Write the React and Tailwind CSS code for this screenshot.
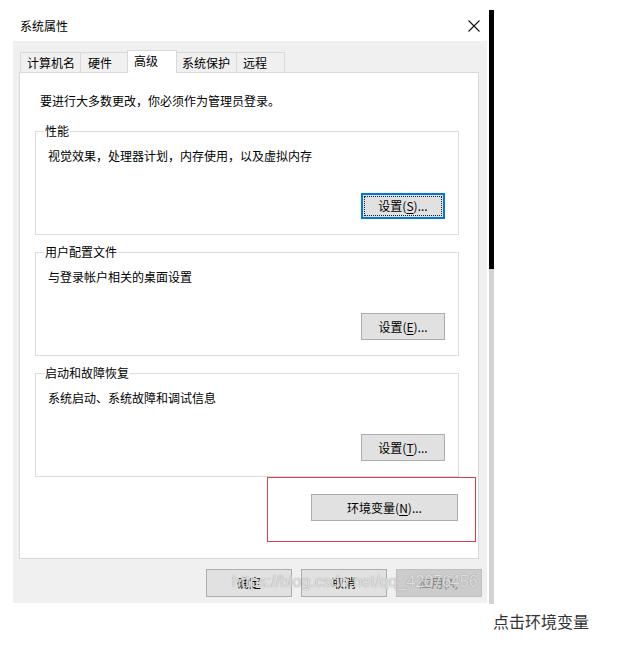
import React from "react";

const FONT = "font-['Microsoft_YaHei','Noto_Sans_CJK_SC',sans-serif]";

function Btn({ label, u, rest, focused, className = "" }) {
  return (
    <div
      className={
        "relative flex items-center justify-center bg-[#e1e1e1] text-[12px] leading-[16px] text-black " +
        (focused ? "border-2 border-[#0078d7] " : "border border-[#adadad] ") +
        className
      }
    >
      {focused && (
        <span className="absolute inset-[1px] border border-dotted border-[#222]" />
      )}
      <span className="relative">
        {label}(<span className="underline underline-offset-2">{u}</span>){rest}
      </span>
    </div>
  );
}

function Group({ title, text, children }) {
  return (
    <div className="relative h-[104px] border border-[#dcdcdc] flex flex-col pl-[12px] pr-[13px] pt-[16px] pb-[15px]">
      <span className="absolute -top-[9px] left-[8px] bg-white px-[1px] text-[12px] leading-[16px] text-black">
        {title}
      </span>
      <div className="text-[12px] leading-[16px] text-black">{text}</div>
      <div className="mt-auto self-end">{children}</div>
    </div>
  );
}

export default function App() {
  return (
    <div className={"relative w-[630px] h-[648px] bg-white overflow-hidden " + FONT}>
      <div className="flex pt-[10px] pl-[13px]">
        <div className="w-[474px] flex flex-col">
          <div className="h-[31px] flex items-center justify-between pl-[7px] pr-[7px] bg-white">
            <span className="text-[12px] leading-[16px] text-black">系统属性</span>
            <svg width="12" height="12" viewBox="0 0 12 12">
              <path d="M0.5 0.5 L11.5 11.5 M11.5 0.5 L0.5 11.5" stroke="#111" strokeWidth="1.1" />
            </svg>
          </div>
          <div className="h-[562px] bg-[#f0f0f0] pt-[9px] flex flex-col">
            <div className="relative z-10 -mb-[1px] h-[23px] flex items-end pl-[7px] text-[12px] leading-[16px] text-black">
              <div className="w-[60px] h-[21px] border border-r-0 border-[#d9d9d9] bg-[#f0f0f0] flex items-center pl-[6px]">计算机名</div>
              <div className="w-[47px] h-[21px] border border-r-0 border-[#d9d9d9] bg-[#f0f0f0] flex items-center pl-[7px]">硬件</div>
              <div className="w-[50px] h-[23px] border border-b-0 border-[#d9d9d9] bg-white flex items-center pl-[6px] pb-[3px]">高级</div>
              <div className="w-[59px] h-[21px] border border-l-0 border-r-0 border-[#d9d9d9] bg-[#f0f0f0] flex items-center pl-[5px]">系统保护</div>
              <div className="w-[49px] h-[21px] border border-[#d9d9d9] bg-[#f0f0f0] flex items-center pl-[6px]">远程</div>
            </div>
            <div className="relative ml-[6px] w-[460px] h-[487px] bg-white border border-[#d9d9d9] pt-[20px] pl-[15px] pr-[19px] flex flex-col">
              <div className="ml-[5px] text-[12px] leading-[16px] text-black">
                要进行大多数更改，你必须作为管理员登录。
              </div>
              <div className="mt-[22px] flex flex-col gap-[17px]">
                <Group title="性能" text="视觉效果，处理器计划，内存使用，以及虚拟内存">
                  <Btn label="设置" u="S" rest="..." focused className="w-[84px] h-[26px]" />
                </Group>
                <Group title="用户配置文件" text="与登录帐户相关的桌面设置">
                  <Btn label="设置" u="E" rest="..." className="w-[84px] h-[27px]" />
                </Group>
                <Group title="启动和故障恢复" text="系统启动、系统故障和调试信息">
                  <Btn label="设置" u="T" rest="..." className="w-[84px] h-[27px]" />
                </Group>
              </div>
              <div className="mt-[17px] self-end mr-[1px]">
                <Btn label="环境变量" u="N" rest="..." className="w-[147px] h-[27px]" />
              </div>
              <div className="absolute left-[247px] top-[404px] w-[209px] h-[65px] border border-[#d9404a]" />
            </div>
            <div className="mt-[10px] flex justify-end gap-[9px] pr-[5px] text-[12px] leading-[16px]">
              <div className="w-[86px] h-[28px] bg-[#e1e1e1] border border-[#adadad] flex items-center justify-center text-black">确定</div>
              <div className="w-[86px] h-[28px] bg-[#e1e1e1] border border-[#adadad] flex items-center justify-center text-black">取消</div>
              <div className="w-[86px] h-[28px] bg-[#cccccc] border border-[#bfbfbf] flex items-center justify-center text-[#838383]">应用(A)</div>
            </div>
          </div>
        </div>
        <div className="ml-[2px] w-[5px] flex flex-col overflow-hidden">
          <div className="h-[259px] bg-black" />
          <div className="h-[335px] bg-[#d2d2d2]" />
        </div>
      </div>
      <div className="absolute left-[232px] top-[572px] text-[16px] leading-[20px] font-['Liberation_Sans',sans-serif] text-white/75 [text-shadow:0_0_1px_#777]">
        https://blog.csdn.net/qq_42076456
      </div>
      <div className="pl-[493px] mt-[6px] text-[16px] leading-[22px] text-[#333]">点击环境变量</div>
    </div>
  );
}
